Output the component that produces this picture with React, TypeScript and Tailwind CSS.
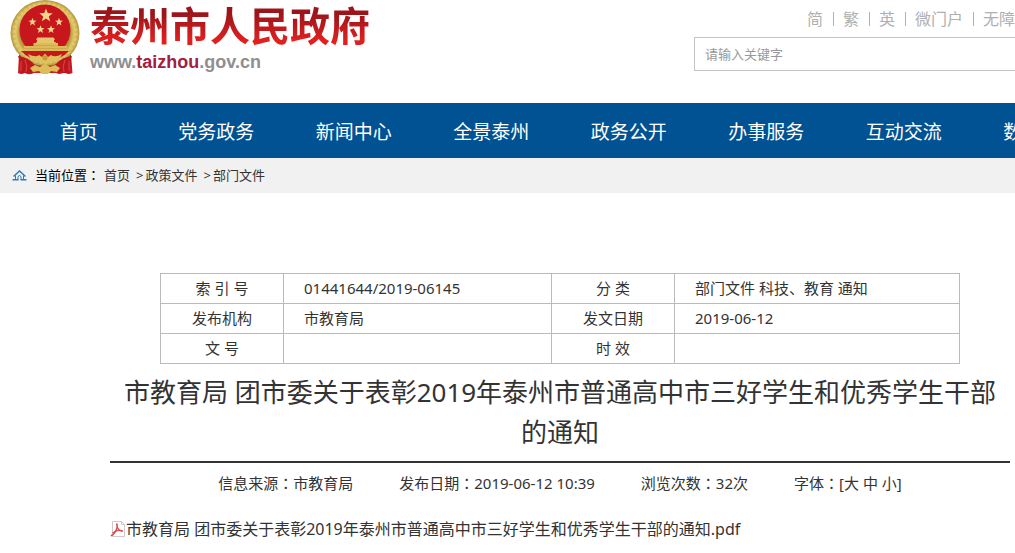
import React from "react";

const topLinks = ["简", "繁", "英", "微门户", "无障碍"];

const navItems = [
  "首页",
  "党务政务",
  "新闻中心",
  "全景泰州",
  "政务公开",
  "办事服务",
  "互动交流",
  "数据开放",
];

const records = [
  ["索 引 号", "01441644/2019-06145", "分 类", "部门文件 科技、教育 通知"],
  ["发布机构", "市教育局", "发文日期", "2019-06-12"],
  ["文 号", "", "时 效", ""],
];

function Colon() {
  return <span className="font-['Noto_Sans_CJK_JP',sans-serif]">：</span>;
}

function Star({ x, y, r }: { x: number; y: number; r: number }) {
  const points = Array.from({ length: 10 }, (_, i) => {
    const a = (Math.PI / 5) * i - Math.PI / 2;
    const d = i % 2 === 0 ? r : r * 0.42;
    return `${(x + d * Math.cos(a)).toFixed(2)},${(y + d * Math.sin(a)).toFixed(2)}`;
  }).join(" ");
  return <polygon points={points} fill="#f1d68a" />;
}

function Emblem() {
  return (
    <svg viewBox="0 0 70 75" className="h-[75px] w-[70px] shrink-0" aria-hidden="true">
      <defs>
        <radialGradient id="wreath" cx="50%" cy="50%" r="50%">
          <stop offset="0.74" stopColor="#b8963c" />
          <stop offset="0.84" stopColor="#dfc566" />
          <stop offset="0.93" stopColor="#cfb150" />
          <stop offset="1" stopColor="#b3963f" />
        </radialGradient>
        <linearGradient id="drape" x1="0" y1="0" x2="0" y2="1">
          <stop offset="0" stopColor="#a8151b" />
          <stop offset="1" stopColor="#cf2026" />
        </linearGradient>
      </defs>
      <path
        d="M9 55 L61 55 L62.500 73 Q58 75 54 72.500 Q50 75 46 73 L24 73 Q19 75.500 15 73 Q11 75 8 73 Z"
        fill="url(#drape)"
      />
      <ellipse cx="35" cy="33" rx="34.500" ry="33" fill="url(#wreath)" />
      <ellipse
        cx="35"
        cy="33"
        rx="31"
        ry="29.500"
        fill="none"
        stroke="#eedb90"
        strokeWidth="3"
        strokeDasharray="3 2"
        opacity="0.4"
      />
      <circle cx="35" cy="30" r="25.500" fill="#c8161d" />
      <Star x={36} y={15.5} r={7} />
      <Star x={22.5} y={22} r={4.2} />
      <Star x={49} y={22} r={4.2} />
      <Star x={30.5} y={29.5} r={4.2} />
      <Star x={41} y={29.5} r={4.2} />
      <path
        d="M26 39.500 L27.500 37.500 L43.500 37.500 L45 39.500 L44 40 L44 41.500 L46.500 43 L26 43 L27 41.500 L27 40 Z"
        fill="#e4c66a"
      />
      <path d="M23.500 43 H48 V46 H57 L58 51 H13 L14 46 H23.500 Z" fill="#dcba58" />
      <path d="M24 45.500 H47.500 M14 48.500 H57.500" stroke="#c59e45" strokeWidth="0.6" />
      <path d="M11 51 H59 Q50 61 35 61 Q20 61 11 51 Z" fill="#c8161d" />
      <path
        d="M18 54 Q26 58 29 55 L32 57 L35 53.500 L38 57 L41 55 Q45 58 52 54 Q49 62 42 61 L38 63 H32 L28 61 Q21 62 18 54 Z"
        fill="#dfc15c"
      />
      <circle cx="35" cy="58" r="2.500" fill="#c39a3e" />
      <path d="M8 56 Q18 57 24 64 L22 73 H10 Q12 65 8 56 Z" fill="#bd171e" />
      <path d="M62 56 Q52 57 46 64 L48 73 H60 Q58 65 62 56 Z" fill="#bd171e" />
      <path
        d="M20 68 L25 65 L30 67 L35 63.500 L40 67 L45 65 L50 68 L47 72 L41 71 L38 74 H32 L29 71 L23 72 Z"
        fill="#dcbd57"
      />
      <path
        d="M15 60 Q18 66 16 72 M55 60 Q52 66 54 72 M11 61 V71 M59 61 V71"
        stroke="#e24a45"
        strokeWidth="0.9"
        fill="none"
      />
    </svg>
  );
}

function HomeIcon() {
  return (
    <svg viewBox="0 0 15 11" className="h-[11px] w-[15px] shrink-0" fill="none" stroke="#2a7bbd" aria-hidden="true">
      <path d="M1.500 6.500 L7.500 1 L13.500 6.500" strokeWidth="1.500" />
      <path d="M3.500 5.500 V9.500 M11.500 5.500 V9.500" />
      <path d="M6 9.500 V6.500 Q7.500 4.500 9 6.500 V9.500" />
      <path d="M0.500 9.700 H6.500 M8.500 9.700 H14.500" strokeWidth="1.400" />
    </svg>
  );
}

function PdfIcon() {
  return (
    <svg viewBox="0 0 16 16" className="h-4 w-4 shrink-0" fill="none" aria-hidden="true">
      <path d="M2.500 0.500 H11.500 L14.500 3.500 V15.500 H2.500 Z" fill="#fff" stroke="#cfc9c9" />
      <path d="M11.500 0.500 V3.500 H14.500" stroke="#cfc9c9" />
      <path d="M6.500 2.500 C8 5 7 8 5.500 10.500 C4.500 12.300 2.500 14.500 0.800 14.800" stroke="#d8454a" strokeWidth="1.500" />
      <path d="M7.200 6 C8 8 10.500 10 12.800 10.500 M2.500 12 C5 10 9 9 12.800 9.800" stroke="#d8454a" strokeWidth="1.200" />
    </svg>
  );
}

export default function App() {
  return (
    <div className="overflow-hidden bg-white font-['Noto_Sans','Noto_Sans_CJK_SC',sans-serif] text-[#333]">
      <div className="min-w-[1120px]">
        <header className="mx-auto flex h-[103px] w-[1100px] items-start justify-between">
          <a href="#" className="flex items-start gap-2.5">
            <Emblem />
            <span className="flex flex-col pt-1.5">
              <span className="bg-linear-to-b from-[#9c151b] from-20% to-[#e0201f] to-85% bg-clip-text text-[40px] leading-10 font-bold text-transparent">
                泰州市人民政府
              </span>
              <span className="pt-1.5 font-['Liberation_Sans',sans-serif] text-[18px] leading-5 font-bold text-[#8f8f8f]">
                www.<span className="text-[#a3203c]">taizhou</span>.gov.cn
              </span>
            </span>
          </a>
          <div className="w-[416px]">
            <ul className="flex h-[37px] items-center gap-2.5 pl-[113px] text-base text-[#b0b0b0]">
              {topLinks.map((t, i) => (
                <li key={t} className="flex shrink-0 items-center gap-[9px]">
                  {i > 0 && <span className="h-3.5 w-px bg-[#b0b0b0]" />}
                  <a href="#">{t}</a>
                </li>
              ))}
            </ul>
            <input
              type="text"
              aria-label="请输入关键字"
              placeholder="请输入关键字"
              className="h-[34px] w-full border border-[#c4c4c4] px-2.5 text-[13px] placeholder:text-[#999]"
            />
          </div>
        </header>

        <nav className="bg-[#005293]">
          <ul className="mx-auto grid h-[55px] w-[1100px] grid-cols-8 items-center pt-[3px] text-center text-[19px] text-white">
            {navItems.map((t) => (
              <li key={t}>
                <a href="#">{t}</a>
              </li>
            ))}
          </ul>
        </nav>

        <div className="bg-[#f1f1f1]">
          <div className="mx-auto flex h-[35px] w-[1100px] items-center pl-0.5 text-[13px]">
            <HomeIcon />
            <span className="pl-2 text-black">
              当前位置
              <Colon />
            </span>
            <a href="#" className="pl-1">首页</a>
            <span className="pr-0.5 pl-1.5">&gt;</span>
            <a href="#">政策文件</a>
            <span className="pr-0.5 pl-1.5">&gt;</span>
            <a href="#">部门文件</a>
          </div>
        </div>

        <main className="mx-auto w-[900px] pt-20 pb-3">
          <table className="mx-auto w-[800px] table-fixed border-collapse text-[15px] leading-5">
            <colgroup>
              <col className="w-[123px]" />
              <col className="w-[268px]" />
              <col className="w-[123px]" />
              <col />
            </colgroup>
            <tbody>
              {records.map(([a, b, c, d]) => (
                <tr key={a} className="h-[30px]">
                  <th className="border border-[#bbb] pb-0.5 font-normal">{a}</th>
                  <td className="border border-[#bbb] pb-0.5 pl-5">{b}</td>
                  <th className="border border-[#bbb] pb-0.5 font-normal">{c}</th>
                  <td className="border border-[#bbb] pb-0.5 pl-5">{d}</td>
                </tr>
              ))}
            </tbody>
          </table>

          <h1 className="border-b-2 border-[#333] px-2.5 pt-2 pb-[9px] text-center text-[26px] leading-10">
            市教育局 团市委关于表彰2019年泰州市普通高中市三好学生和优秀学生干部的通知
          </h1>

          <div className="flex h-10 items-center justify-center gap-[46px] text-[15px]">
            <span>信息来源<Colon />市教育局</span>
            <span>发布日期<Colon />2019-06-12 10:39</span>
            <span>浏览次数<Colon />32次</span>
            <span>
              字体<Colon />[<button type="button">大</button> <button type="button">中</button>{" "}
              <button type="button">小</button>]
            </span>
          </div>

          <a href="#" className="flex items-center pt-3.5 text-base">
            <PdfIcon />
            市教育局 团市委关于表彰2019年泰州市普通高中市三好学生和优秀学生干部的通知.pdf
          </a>
        </main>
      </div>
    </div>
  );
}
